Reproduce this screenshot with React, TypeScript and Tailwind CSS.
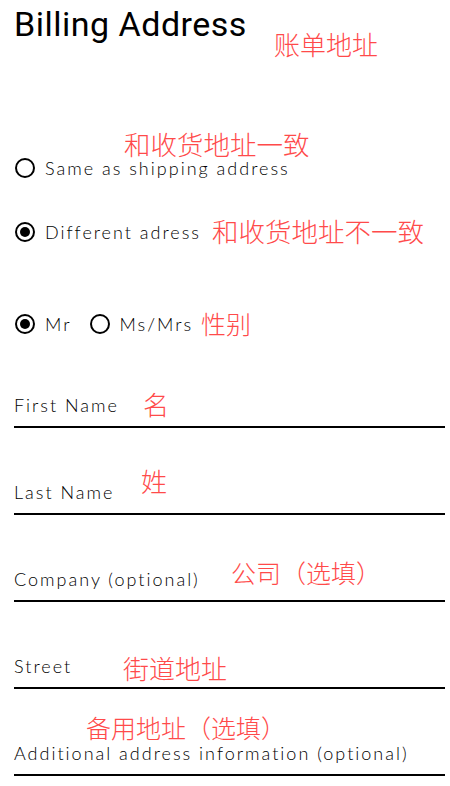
import React from "react";

const LABEL = "font-['Lato','Open_Sans',sans-serif] font-light text-[18px] leading-[20px] tracking-[2px] text-black";

function Radio({ checked }: { checked?: boolean }) {
  return (
    <span className="flex h-[20px] w-[20px] shrink-0 items-center justify-center rounded-full border-[2.5px] border-black">
      {checked && <span className="h-[10px] w-[10px] rounded-full bg-black" />}
    </span>
  );
}

function Note({ text, x, y, size = 26 }: { text: string; x: number; y: number; size?: number }) {
  return (
    <span
      className="absolute whitespace-nowrap font-['Noto_Sans_CJK_SC',sans-serif] font-light leading-none text-[#ff4a4a]"
      style={{ left: x, top: y, fontSize: size }}
    >
      {text}
    </span>
  );
}

function Field({ label }: { label: string }) {
  return (
    <div className="flex h-[87px] flex-col justify-end border-b-2 border-black pb-[11px]">
      <span className={LABEL}>{label}</span>
    </div>
  );
}

export default function App() {
  return (
    <div className="relative h-[786px] w-[450px] overflow-hidden bg-white">
      <div className="pl-[14px] pr-[5px]">
        <h1 className="h-[48px] pt-[3px] font-['Roboto',sans-serif] text-[34px] font-normal leading-[42px] tracking-[0.5px] text-black">
          Billing Address
        </h1>
        <div className="mt-[110px] flex flex-col gap-[44px] pl-[1px]">
          <label className="flex h-[20px] items-center gap-[10px]">
            <Radio />
            <span className={LABEL}>Same as shipping address</span>
          </label>
          <label className="flex h-[20px] items-center gap-[10px]">
            <Radio checked />
            <span className={LABEL}>Different adress</span>
          </label>
        </div>
        <div className="mt-[72px] flex h-[20px] items-center pl-[1px]">
          <label className="flex items-center gap-[10px]">
            <Radio checked />
            <span className={LABEL}>Mr</span>
          </label>
          <label className="ml-[18px] flex items-center gap-[10px]">
            <Radio />
            <span className={LABEL}>Ms/Mrs</span>
          </label>
        </div>
        <div className="mt-[7px]">
          <Field label="First Name" />
          <Field label="Last Name" />
          <Field label="Company (optional)" />
          <Field label="Street" />
          <Field label="Additional address information (optional)" />
        </div>
      </div>

      <Note text="账单地址" x={274} y={31} />
      <Note text="和收货地址一致" x={124} y={131} size={26.5} />
      <Note text="和收货地址不一致" x={212} y={218} size={26.5} />
      <Note text="性别" x={201} y={311} size={25} />
      <Note text="名" x={143} y={391} />
      <Note text="姓" x={141} y={468} />
      <Note text="公司（选填）" x={231} y={560} size={25} />
      <Note text="街道地址" x={123} y={655} />
      <Note text="备用地址（选填）" x={86} y={715} size={25} />
    </div>
  );
}
